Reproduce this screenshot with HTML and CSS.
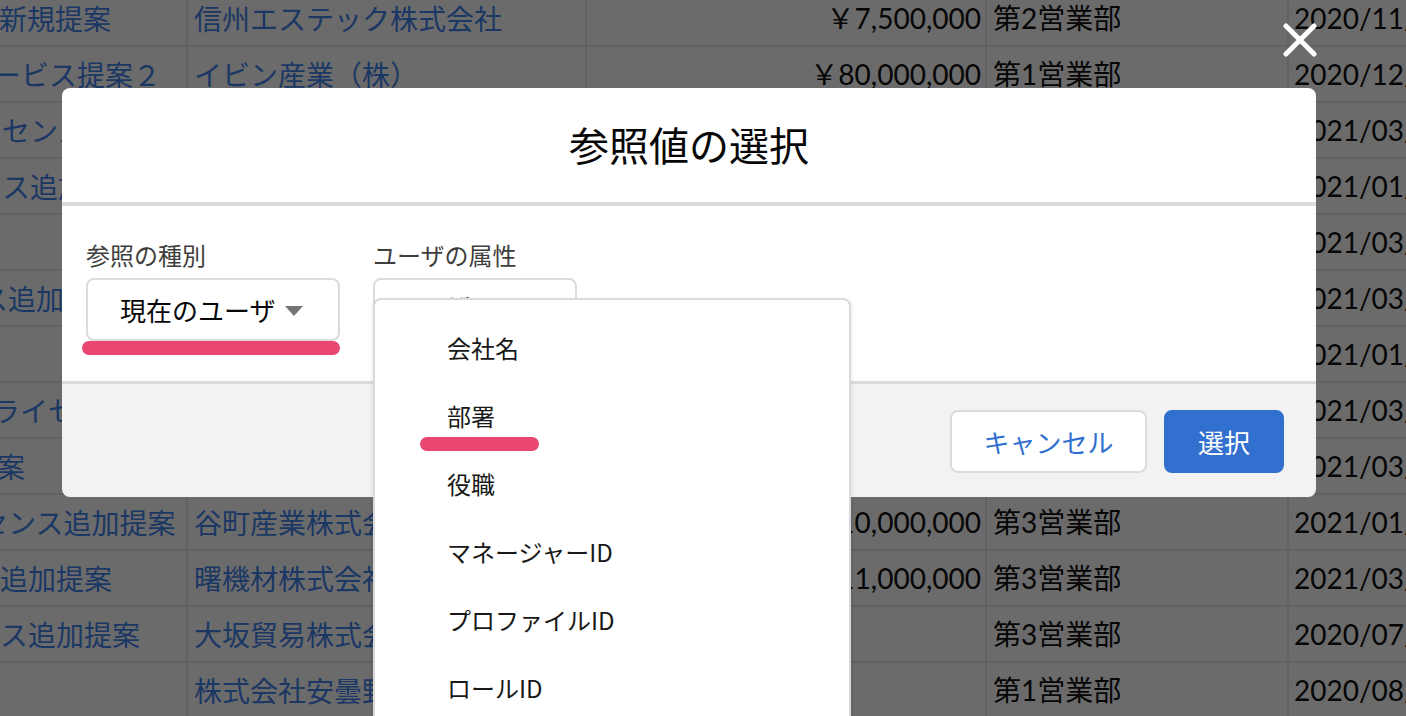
FILE: index.html
```html
<!DOCTYPE html>
<html lang="ja">
<head>
<meta charset="utf-8">
<title>参照値の選択</title>
<link rel="stylesheet" href="styles.css">
</head>
<body>
<div class="sheet">
  <div class="row"><div class="c c1"><span class="t o1">新規提案</span></div><div class="c c2">信州エステック株式会社</div><div class="c c3">￥7,500,000</div><div class="c c4">第2営業部</div><div class="c c5">2020/11/30</div></div>
  <div class="row"><div class="c c1"><span class="t o2">ービス提案２</span></div><div class="c c2">イビン産業（株）</div><div class="c c3">￥80,000,000</div><div class="c c4">第1営業部</div><div class="c c5">2020/12/25</div></div>
  <div class="row"><div class="c c1"><span class="t o3">センス追加提案</span></div><div class="c c2">丸山商事株式会社</div><div class="c c3">￥3,000,000</div><div class="c c4">第2営業部</div><div class="c c5">2021/03/31</div></div>
  <div class="row"><div class="c c1"><span class="t o3">ス追加提案</span></div><div class="c c2">北斗電機株式会社</div><div class="c c3">￥1,200,000</div><div class="c c4">第1営業部</div><div class="c c5">2021/01/29</div></div>
  <div class="row"><div class="c c1"></div><div class="c c2">東和物産株式会社</div><div class="c c3"></div><div class="c c4">第3営業部</div><div class="c c5">2021/03/15</div></div>
  <div class="row"><div class="c c1"><span class="t o6">ス追加提案</span></div><div class="c c2">青葉工業株式会社</div><div class="c c3">￥500,000</div><div class="c c4">第2営業部</div><div class="c c5">2021/03/10</div></div>
  <div class="row"><div class="c c1"></div><div class="c c2">三河精工株式会社</div><div class="c c3"></div><div class="c c4">第1営業部</div><div class="c c5">2021/01/20</div></div>
  <div class="row"><div class="c c1"><span class="t o8">ライセンス提案</span></div><div class="c c2">港南システム株式会社</div><div class="c c3">￥2,400,000</div><div class="c c4">第3営業部</div><div class="c c5">2021/03/05</div></div>
  <div class="row"><div class="c c1"><span class="t o9">提案</span></div><div class="c c2">富士見建設株式会社</div><div class="c c3">￥900,000</div><div class="c c4">第2営業部</div><div class="c c5">2021/03/26</div></div>
  <div class="row"><div class="c c1"><span class="t o10">センス追加提案</span></div><div class="c c2">谷町産業株式会社</div><div class="c c3">￥10,000,000</div><div class="c c4">第3営業部</div><div class="c c5">2021/01/15</div></div>
  <div class="row"><div class="c c1"><span class="t o11">追加提案</span></div><div class="c c2">曙機材株式会社</div><div class="c c3">￥11,000,000</div><div class="c c4">第3営業部</div><div class="c c5">2021/03/19</div></div>
  <div class="row"><div class="c c1"><span class="t o11">ス追加提案</span></div><div class="c c2">大坂貿易株式会社</div><div class="c c3"></div><div class="c c4">第3営業部</div><div class="c c5">2020/07/31</div></div>
  <div class="row"><div class="c c1"></div><div class="c c2">株式会社安曇野ホールディングス</div><div class="c c3"></div><div class="c c4">第1営業部</div><div class="c c5">2020/08/28</div></div>
</div>

<div class="close" aria-label="閉じる">
  <svg width="34" height="34" viewBox="0 0 34 34"><path d="M3 3 L31 31 M31 3 L3 31" stroke="#ffffff" stroke-width="5" stroke-linecap="round" fill="none"/></svg>
</div>

<div class="modal">
  <header class="modal-head"><h2 class="title">参照値の選択</h2></header>
  <div class="modal-body">
    <div class="field">
      <div class="label">参照の種別</div>
      <div class="select s1"><span class="val">現在のユーザ</span><span class="caret"></span></div>
    </div>
    <div class="field">
      <div class="label">ユーザの属性</div>
      <div class="select s2"><span class="val v2">ユーザ</span></div>
    </div>
  </div>
  <footer class="modal-foot">
    <button class="btn neutral">キャンセル</button>
    <button class="btn brand">選択</button>
  </footer>
  <span class="mark mark1"></span>
  <div class="menu">
    <div class="opt">会社名</div>
    <div class="opt">部署</div>
    <div class="opt">役職</div>
    <div class="opt">マネージャーID</div>
    <div class="opt">プロファイルID</div>
    <div class="opt">ロールID</div>
    <div class="opt">ユーザID</div>
    <span class="mark mark2"></span>
  </div>
</div>
</body>
</html>
```
FILE: styles.css
```css
* { box-sizing: border-box; }
html, body { margin: 0; padding: 0; }
body {
  width: 1406px;
  height: 716px;
  overflow: hidden;
  position: relative;
  background: #6b6b6b;
  font-family: "Noto Sans CJK JP", "Noto Sans", sans-serif;
}

/* background sheet */
.sheet { margin-top: -9px; }
.row {
  display: grid;
  grid-template-columns: 188px 399px 400px 302px 1fr;
  height: 56px;
  border-bottom: 2px solid #616161;
}
.c {
  border-right: 2px solid #626262;
  font-family: Lato, "Noto Sans CJK JP", sans-serif;
  font-size: 28px;
  line-height: 54px;
  white-space: nowrap;
  overflow: hidden;
  padding: 0 6px;
  color: #060606;
}
.c1, .c2 { color: #1b3764; font-family: "Noto Sans CJK JP", sans-serif; }
.c1 { padding: 0; }
.c3 { text-align: right; padding-right: 4px; }
.c5 { border-right: none; padding-left: 5px; }
.t { display: inline-block; }
.o1 { margin-left: -1px; }
.o2 { margin-left: -7px; }
.o3 { margin-left: 2px; }
.o6 { margin-left: -20px; }
.o8 { margin-left: -8px; }
.o9 { margin-left: -31px; }
.o10 { margin-left: -20px; }
.o11 { margin-left: 0; }

/* close */
.close {
  position: absolute;
  left: 1283px;
  top: 23px;
  width: 34px;
  height: 34px;
}
.close svg { display: block; }

/* modal */
.modal {
  position: absolute;
  left: 62px;
  top: 88px;
  width: 1254px;
  height: 409px;
  display: flex;
  flex-direction: column;
  border-radius: 8px;
  color: #080707;
}
.modal-head {
  height: 118px;
  background: #fff;
  border-radius: 8px 8px 0 0;
  border-bottom: 4px solid #dddbda;
  display: flex;
  align-items: center;
  justify-content: center;
}
.title {
  margin: 0 0 2px;
  font-size: 40px;
  font-weight: 400;
  line-height: 56px;
}
.modal-body {
  height: 175px;
  background: #fff;
  padding: 31px 24px 0;
  display: flex;
  gap: 33px;
}
.field { display: flex; flex-direction: column; gap: 5px; }
.label {
  font-size: 24px;
  line-height: 36px;
  color: #3e3e3c;
}
.select {
  height: 63px;
  border: 2px solid #dddbda;
  border-radius: 8px;
  background: #fff;
  display: flex;
  align-items: center;
  font-size: 26px;
  line-height: 59px;
  color: #080707;
}
.s1 { width: 254px; padding-left: 32px; }
.s2 { width: 204px; padding-left: 18px; align-items: flex-start; }
.v2 { line-height: 53px; }
.caret {
  width: 0;
  height: 0;
  margin-left: 10px;
  margin-top: 2px;
  border-left: 9px solid transparent;
  border-right: 9px solid transparent;
  border-top: 10px solid #747474;
}
.modal-foot {
  flex: 1;
  background: #f3f2f2;
  border-top: 3px solid #dddbda;
  border-radius: 0 0 8px 8px;
  display: flex;
  justify-content: flex-end;
  align-items: center;
  gap: 17px;
  padding: 0 32px 0 0;
}
.btn {
  height: 63px;
  border-radius: 8px;
  font-family: "Noto Sans CJK JP", "Noto Sans", sans-serif;
  font-size: 26px;
  line-height: 59px;
  padding: 0;
  margin: 2px 0 0;
}
.neutral {
  width: 197px;
  background: #fff;
  border: 2px solid #dddbda;
  color: #3070cf;
}
.brand {
  width: 120px;
  background: #3170cf;
  border: 2px solid #3170cf;
  color: #fff;
}

/* highlight marks */
.mark {
  position: absolute;
  height: 14px;
  border-radius: 7px;
  background: #ea4770;
}
.mark1 { left: 20px; top: 253px; width: 258px; }
.mark2 { left: 45px; top: 137px; width: 119px; }

/* dropdown */
.menu {
  position: absolute;
  left: 311px;
  top: 210px;
  width: 478px;
  height: 520px;
  background: #fff;
  border: 2px solid #d9d9d9;
  border-radius: 8px;
  box-shadow: 0 2px 4px rgba(0, 0, 0, 0.12);
  padding-top: 14px;
}
.opt {
  height: 68px;
  line-height: 68px;
  padding-left: 72px;
  font-size: 24px;
  color: #181818;
  white-space: nowrap;
}
```
